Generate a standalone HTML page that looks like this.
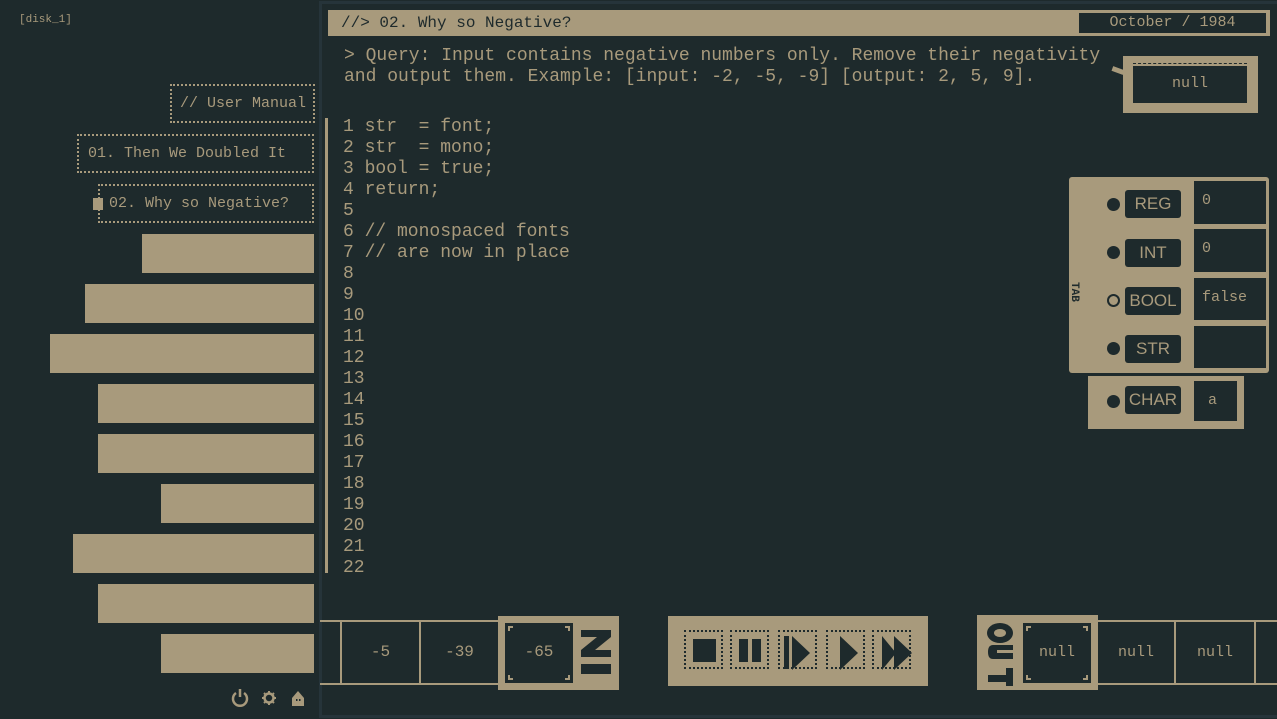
<!DOCTYPE html>
<html><head><meta charset="utf-8"><style>
*{margin:0;padding:0;box-sizing:border-box}
body{width:1277px;height:719px;background:#1e2a2c;overflow:hidden;position:relative;font-family:"Liberation Mono",monospace;color:#a89a7c}
.a{position:absolute}
.t{background:#a89a7c}
.d{background:#1e2a2c}
.dot{border:2px dotted #a89a7c}
.bar{position:absolute;height:39px;background:#a89a7c;right:963px}
.code{position:absolute;left:343px;top:117px;font-size:18px;line-height:21px;white-space:pre}
.lab{position:absolute;left:1125px;width:56px;height:28px;background:#1e2a2c;border-radius:3px;color:#a89a7c;font-family:"Liberation Sans",sans-serif;font-size:17px;text-align:center;line-height:28px}
.val{position:absolute;left:1194px;width:72px;background:#1e2a2c;font-size:15px;padding:11px 0 0 8px}
.pt{position:absolute;left:1107px;width:13px;height:13px;border-radius:50%;background:#1e2a2c}
.cell{position:absolute;font-size:16px;text-align:center;line-height:61px;top:622px;height:61px}
.btn{position:absolute;top:630px;width:39px;height:39px;border:2px dotted #1e2a2c}
</style></head><body>
<div class="a" style="left:19px;top:14px;font-size:11px">[disk_1]</div>
<div class="a dot" style="left:170px;top:84px;width:145px;height:39px;font-size:15px;line-height:35px;padding-left:8px">// User Manual</div>
<div class="a dot" style="left:77px;top:134px;width:237px;height:39px;font-size:15px;line-height:35px;padding-left:9px">01. Then We Doubled It</div>
<div class="a dot" style="left:98px;top:184px;width:216px;height:39px;font-size:15px;line-height:35px;padding-left:9px">02. Why so Negative?</div>
<div class="a t" style="left:93px;top:198px;width:10px;height:12px"></div>
<div class="bar" style="left:142px;top:234px"></div>
<div class="bar" style="left:85px;top:284px"></div>
<div class="bar" style="left:50px;top:334px"></div>
<div class="bar" style="left:98px;top:384px"></div>
<div class="bar" style="left:98px;top:434px"></div>
<div class="bar" style="left:161px;top:484px"></div>
<div class="bar" style="left:73px;top:534px"></div>
<div class="bar" style="left:98px;top:584px"></div>
<div class="bar" style="left:161px;top:634px"></div>
<svg class="a" style="left:230px;top:688px" width="80" height="20" viewBox="0 0 80 20">
<g fill="none" stroke="#a89a7c" stroke-width="2.5"><path d="M6 5 A7 7 0 1 0 14 5"/><path d="M10 1v8"/><circle cx="39" cy="10" r="4.5"/></g>
<g stroke="#a89a7c" stroke-width="2"><path d="M39 3v2M39 15v2M32 10h2M44 10h2M34 5l1 1M43 14l1 1M34 15l1-1M43 6l1-1"/></g>
<path d="M62 10 L68 3 L74 10 V18 H62Z" fill="#a89a7c"/><rect x="66" y="11" width="1.5" height="2" fill="#1e2a2c"/><rect x="69" y="11" width="1.5" height="2" fill="#1e2a2c"/>
</svg>
<div class="a" style="left:319px;top:1px;width:958px;height:717px;border:3px solid #26343a;border-right:none"></div>
<div class="a t" style="left:328px;top:10px;width:942px;height:26px"></div>
<div class="a" style="left:341px;top:11px;font-size:16px;line-height:24px;color:#1e2a2c">//&gt; 02. Why so Negative?</div>
<div class="a d" style="left:1079px;top:13px;width:187px;height:20px;font-size:15px;text-align:center;line-height:20px">October / 1984</div>
<div class="a" style="left:344px;top:46px;font-size:18px;line-height:21px;white-space:pre">&gt; Query: Input contains negative numbers only. Remove their negativity
and output them. Example: [input: -2, -5, -9] [output: 2, 5, 9].</div>
<div class="a t" style="left:1112px;top:68px;width:12px;height:5px;transform:rotate(20deg)"></div>
<div class="a t" style="left:1123px;top:56px;width:135px;height:57px"></div>
<div class="a" style="left:1133px;top:63px;width:114px;border-top:1px dashed #1e2a2c"></div>
<div class="a d" style="left:1133px;top:66px;width:114px;height:37px;font-size:15px;text-align:center;line-height:35px">null</div>
<div class="a t" style="left:325px;top:118px;width:3px;height:455px"></div>
<div class="code">1 str  = font;
2 str  = mono;
3 bool = true;
4 return;
5
6 // monospaced fonts
7 // are now in place
8
9
10
11
12
13
14
15
16
17
18
19
20
21
22</div>
<div class="a t" style="left:1069px;top:177px;width:200px;height:196px;border-radius:3px"></div>
<div class="a t" style="left:1088px;top:376px;width:156px;height:53px"></div>
<div class="a" style="top:282px;left:1080px;font-size:11px;font-weight:bold;color:#1e2a2c;transform:rotate(90deg);transform-origin:left top">TAB</div>
<div class="pt" style="top:198px"></div><div class="lab" style="top:190px">REG</div><div class="val" style="top:181px;height:43px">0</div>
<div class="pt" style="top:246px"></div><div class="lab" style="top:239px">INT</div><div class="val" style="top:229px;height:43px">0</div>
<div class="pt" style="top:294px;background:none;border:2px solid #1e2a2c"></div><div class="lab" style="top:287px">BOOL</div><div class="val" style="top:278px;height:42px">false</div>
<div class="pt" style="top:342px"></div><div class="lab" style="top:335px">STR</div><div class="val" style="top:326px;height:42px"></div>
<div class="pt" style="top:395px"></div><div class="lab" style="top:386px">CHAR</div><div class="val" style="top:381px;height:40px;width:43px;padding-left:14px">a</div>
<div class="a t" style="left:320px;top:620px;width:180px;height:2px"></div>
<div class="a t" style="left:320px;top:683px;width:180px;height:2px"></div>
<div class="a t" style="left:340px;top:620px;width:2px;height:65px"></div>
<div class="a t" style="left:419px;top:620px;width:2px;height:65px"></div>
<div class="cell" style="left:342px;width:77px">-5</div>
<div class="cell" style="left:421px;width:77px">-39</div>
<div class="a t" style="left:498px;top:616px;width:121px;height:74px"></div>
<div class="a d" style="left:505px;top:623px;width:68px;height:60px"></div>
<div class="cell" style="left:505px;width:68px;top:622px">-65</div>
<svg class="a" style="left:505px;top:623px" width="68" height="60"><g fill="#a89a7c"><path d="M3 3h5v2H5v3H3zM65 3h-5v2h3v3h2zM3 57h5v-2H5v-3H3zM65 57h-5v-2h3v-3h2z"/></g></svg>
<svg class="a" style="left:580px;top:628px" width="32" height="48"><g fill="#1e2a2c"><path d="M1 2h30v7L15 22h16v7H1v-7L17 9H1z"/><rect x="1" y="36" width="30" height="10"/></g></svg>
<div class="a t" style="left:668px;top:616px;width:260px;height:70px"></div>
<div class="btn" style="left:684px"></div><div class="a d" style="left:693px;top:639px;width:23px;height:23px"></div>
<div class="btn" style="left:730px"></div><div class="a d" style="left:739px;top:639px;width:9px;height:23px"></div><div class="a d" style="left:752px;top:639px;width:9px;height:23px"></div>
<div class="btn" style="left:778px"></div>
<div class="btn" style="left:826px"></div>
<div class="btn" style="left:872px"></div>
<svg class="a" style="left:668px;top:616px" width="260" height="70"><g fill="#1e2a2c">
<rect x="116" y="20" width="5" height="33"/><path d="M124 20 L142 37 L124 54Z"/>
<path d="M172 20 L190 37 L172 54Z"/>
<path d="M214 20 L228 37 L214 54Z"/><path d="M226 20 L244 37 L226 54Z"/></g></svg>
<div class="a t" style="left:1098px;top:620px;width:179px;height:2px"></div>
<div class="a t" style="left:1098px;top:683px;width:179px;height:2px"></div>
<div class="a t" style="left:1174px;top:620px;width:2px;height:65px"></div>
<div class="a t" style="left:1254px;top:620px;width:2px;height:65px"></div>
<div class="cell" style="left:1098px;width:76px;font-size:15px">null</div>
<div class="cell" style="left:1176px;width:78px;font-size:15px">null</div>
<div class="a t" style="left:977px;top:615px;width:121px;height:75px"></div>
<div class="a d" style="left:1023px;top:623px;width:68px;height:60px"></div>
<div class="cell" style="left:1023px;width:68px;font-size:15px">null</div>
<svg class="a" style="left:1023px;top:623px" width="68" height="60"><g fill="#a89a7c"><path d="M3 3h5v2H5v3H3zM65 3h-5v2h3v3h2zM3 57h5v-2H5v-3H3zM65 57h-5v-2h3v-3h2z"/></g></svg>
<svg class="a" style="left:985px;top:620px" width="32" height="66"><g fill="#1e2a2c">
<ellipse cx="15" cy="13" rx="13" ry="10"/><ellipse cx="15" cy="13" rx="6" ry="4" fill="#a89a7c"/>
<path d="M28 25H8q-5 0-5 7t5 7h20v-6H12v-3h16z"/>
<path d="M28 48v21h-7v-7H3v-7h18v-7z"/></g></svg>
</body></html>
